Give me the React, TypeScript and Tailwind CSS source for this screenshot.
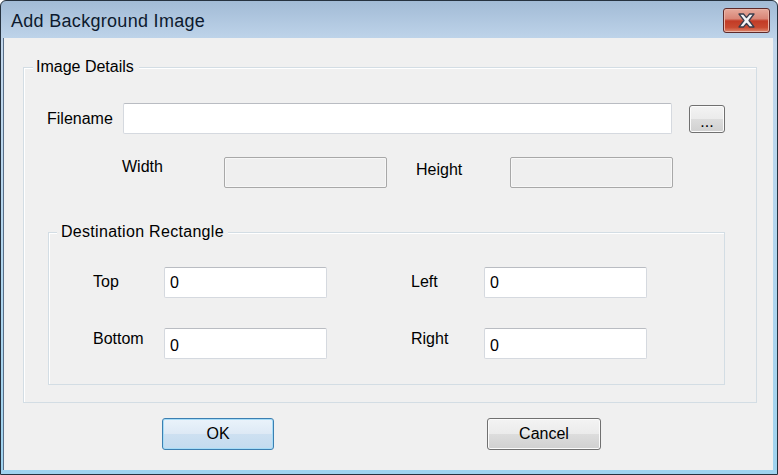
import React from "react";

const font = "font-['Liberation_Sans',Arial,sans-serif]";

function TextBox({ value, className }: { value?: string; className: string }) {
  return (
    <input
      readOnly
      value={value ?? ""}
      className={`h-[31px] rounded-[2px] border border-[#d5d9df] border-t-[#b9bcc2] bg-white px-[5px] text-[16px] text-black outline-none ${font} ${className}`}
    />
  );
}

function ReadOnlyBox() {
  return (
    <div className="h-[31px] w-[163px] rounded-[2px] border border-[#a8a8a8] bg-[#efefef] shadow-[inset_0_0_0_1px_#f7f7f7]" />
  );
}

function Btn({ label, primary, className }: { label: string; primary?: boolean; className: string }) {
  const look = primary
    ? "border-[#3c7fb1] shadow-[inset_0_0_0_1px_#a6dcf7] bg-[linear-gradient(#eaf3fb,#dde9f5_50%,#cde0f1_50%,#c3dbef)]"
    : "border-[#707070] shadow-[inset_0_0_0_1px_#fbfbfb] bg-[linear-gradient(#f3f3f3,#ebebeb_50%,#dddddd_50%,#d0d0d0)]";
  return (
    <button className={`rounded-[3px] border text-[16px] leading-none text-black ${look} ${className}`}>
      {label}
    </button>
  );
}

export default function App() {
  return (
    <div
      className={`flex h-[475px] w-[778px] flex-col overflow-hidden rounded-t-[6px] border border-[#26323f] bg-linear-to-b from-[#a2bbd6] via-[#c2d7ec] via-[9%] to-[#9fd3ef] text-black ${font}`}
    >
      {/* Title bar */}
      <div className="flex h-[37px] shrink-0 items-start justify-between">
        <span className="pl-[10px] pt-[10px] text-[18px] leading-[20px] tracking-[0.3px] text-[#0d1a2e]">
          Add Background Image
        </span>
        <div className="mr-[7px] mt-[7px] flex h-[25px] w-[47px] items-center justify-center rounded-[3px] border border-[#5e2a2a] bg-[linear-gradient(#e6a99b,#d98677_42%,#c23b26_52%,#c94a31_80%,#df8a70)] shadow-[inset_0_0_0_1px_#eab5a8]">
          <svg width="19" height="15" viewBox="0 0 19 15">
            <polygon
              points="2,1 6.5,1 9.5,4.6 12.5,1 17,1 12,7.5 17,14 12.5,14 9.5,10.4 6.5,14 2,14 7,7.5"
              fill="#f4f4f6"
              stroke="#3b3d4c"
              strokeWidth="1.3"
              strokeLinejoin="round"
            />
          </svg>
        </div>
      </div>

      {/* Client area */}
      <div className="ml-[3px] mr-[4px] flex h-[432px] flex-col bg-[#f0f0f0] shadow-[-1px_0_0_#5a6f88]">
        <fieldset className="ml-[19px] mr-[16px] mt-[20px] border border-[#d3dde4] pb-[17px] shadow-[inset_1px_1px_0_#ffffff]">
          <legend className="ml-[9px] bg-[#f0f0f0] pl-[3px] pr-[5px] text-[16px] leading-[18px]">
            Image Details
          </legend>

          {/* Filename row */}
          <div className="mt-[27px] flex items-center pl-[23px]">
            <span className="w-[76px] text-[16px] leading-[18px]">Filename</span>
            <TextBox className="w-[549px]" />
            <Btn label="..." className="ml-[17px] h-[28px] w-[36px] pt-[6px] text-[13px]" />
          </div>

          {/* Width / Height row */}
          <div className="mt-[23px] flex items-start pl-[98px]">
            <span className="mt-[1px] w-[102px] text-[16px] leading-[18px]">Width</span>
            <ReadOnlyBox />
            <span className="ml-[29px] mt-[4px] w-[94px] text-[16px] leading-[18px]">Height</span>
            <ReadOnlyBox />
          </div>

          {/* Destination Rectangle */}
          <fieldset className="ml-[24px] mr-[31px] mt-[35px] border border-[#d3dde4] pb-[25px] shadow-[inset_1px_1px_0_#ffffff]">
            <legend className="ml-[8px] bg-[#f0f0f0] px-[4px] text-[16px] leading-[18px] tracking-[0.3px]">
              Destination Rectangle
            </legend>

            <div className="mt-[26px] flex items-start pl-[44px]">
              <span className="mt-[6px] w-[71px] text-[16px] leading-[18px]">Top</span>
              <TextBox value="0" className="w-[163px]" />
              <span className="ml-[84px] mt-[6px] w-[73px] text-[16px] leading-[18px]">Left</span>
              <TextBox value="0" className="w-[163px]" />
            </div>

            <div className="mt-[30px] flex items-start pl-[44px]">
              <span className="mt-[2px] w-[71px] text-[16px] leading-[18px]">Bottom</span>
              <TextBox value="0" className="w-[163px] pt-[4px]" />
              <span className="ml-[84px] mt-[2px] w-[73px] text-[16px] leading-[18px]">Right</span>
              <TextBox value="0" className="w-[163px] pt-[4px]" />
            </div>
          </fieldset>
        </fieldset>

        {/* Dialog buttons */}
        <div className="mt-[15px] flex pl-[158px]">
          <Btn label="OK" primary className="h-[32px] w-[112px]" />
          <Btn label="Cancel" className="ml-[213px] h-[32px] w-[114px]" />
        </div>
      </div>
    </div>
  );
}
